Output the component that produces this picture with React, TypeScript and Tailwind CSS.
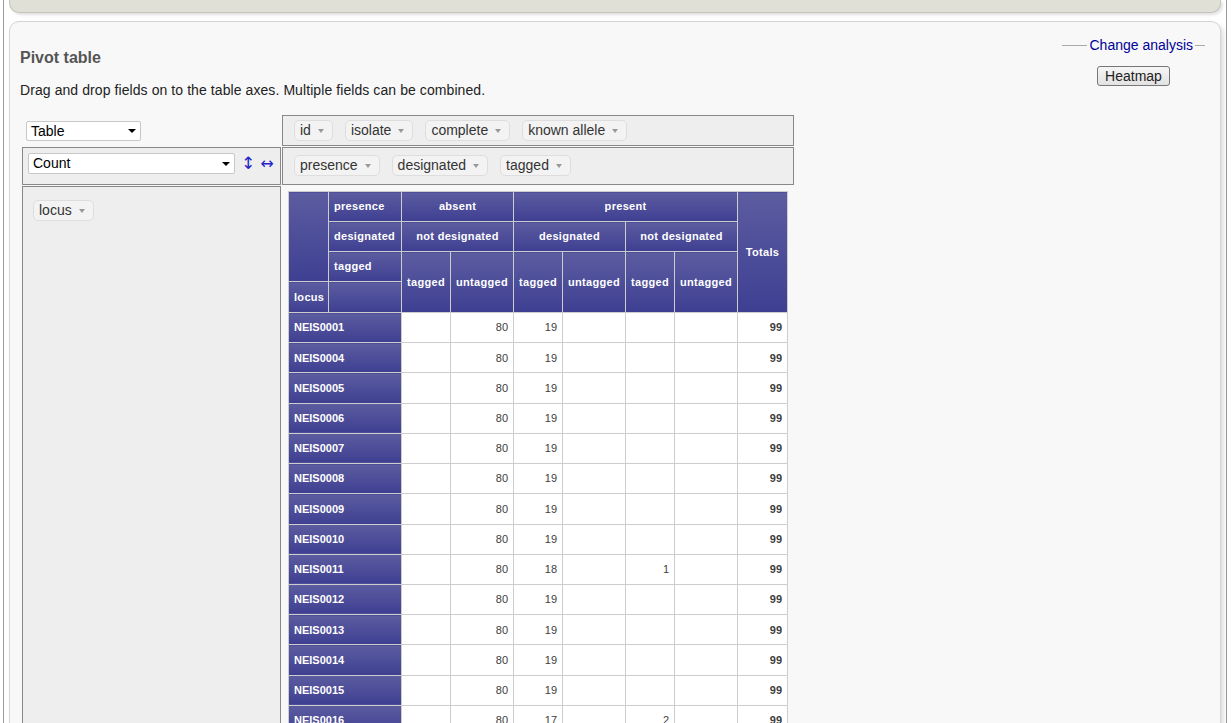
import React from 'react';

// header / row label cell look of the pivot table
const hd =
	"border border-[#cdcdcd] bg-linear-to-b from-[#5c5ca0] to-[#3f3f92] px-[5px] text-[11px] font-bold tracking-[0.3px] text-white";
const td = "border border-[#cdcdcd] bg-white px-[5px] text-right text-[11px] text-[#3d3d3d]";

type Row = {
	locus: string;
	absentUntagged: number;
	desTagged: number;
	notDesTagged?: number;
	total: number;
};

const rows: Row[] = [
	{ locus: "NEIS0001", absentUntagged: 80, desTagged: 19, total: 99 },
	{ locus: "NEIS0004", absentUntagged: 80, desTagged: 19, total: 99 },
	{ locus: "NEIS0005", absentUntagged: 80, desTagged: 19, total: 99 },
	{ locus: "NEIS0006", absentUntagged: 80, desTagged: 19, total: 99 },
	{ locus: "NEIS0007", absentUntagged: 80, desTagged: 19, total: 99 },
	{ locus: "NEIS0008", absentUntagged: 80, desTagged: 19, total: 99 },
	{ locus: "NEIS0009", absentUntagged: 80, desTagged: 19, total: 99 },
	{ locus: "NEIS0010", absentUntagged: 80, desTagged: 19, total: 99 },
	{ locus: "NEIS0011", absentUntagged: 80, desTagged: 18, notDesTagged: 1, total: 99 },
	{ locus: "NEIS0012", absentUntagged: 80, desTagged: 19, total: 99 },
	{ locus: "NEIS0013", absentUntagged: 80, desTagged: 19, total: 99 },
	{ locus: "NEIS0014", absentUntagged: 80, desTagged: 19, total: 99 },
	{ locus: "NEIS0015", absentUntagged: 80, desTagged: 19, total: 99 },
	{ locus: "NEIS0016", absentUntagged: 80, desTagged: 17, notDesTagged: 2, total: 99 },
	{ locus: "NEIS0017", absentUntagged: 80, desTagged: 19, total: 99 },
	{ locus: "NEIS0018", absentUntagged: 80, desTagged: 19, total: 99 },
];

function Chip({ label }: { label: string }) {
	return (
		<span className="inline-flex h-[21px] items-center whitespace-nowrap rounded-[5px] border border-[#dedede] bg-[#f3f3f3] pl-[5px] pr-[8px] text-[14px] text-[#333]">
			{label}
			<svg className="ml-[7px]" width="6" height="4" viewBox="0 0 6 4">
				<path d="M0 0h6L3 4z" fill="#999" />
			</svg>
		</span>
	);
}

function FakeSelect({ label, className }: { label: string; className: string }) {
	return (
		<div className={"flex items-center justify-between rounded-[2px] border border-[#c8c8c8] bg-white pl-[4px] pr-[4px] text-[14px] text-black " + className}>
			<span>{label}</span>
			<svg width="8" height="4" viewBox="0 0 8 4">
				<path d="M0 0h8L4 4z" fill="#000" />
			</svg>
		</div>
	);
}

function PivotTable() {
	return (
		<table className="w-[499px] table-fixed border-collapse">
			<colgroup>
				<col className="w-[40px]" />
				<col className="w-[73px]" />
				<col className="w-[49px]" />
				<col className="w-[63px]" />
				<col className="w-[49px]" />
				<col className="w-[63px]" />
				<col className="w-[49px]" />
				<col className="w-[63px]" />
				<col className="w-[50px]" />
			</colgroup>
			<thead>
				<tr className="h-[30px]">
					<th rowSpan={3} className={hd} />
					<th className={hd + " text-left"}>presence</th>
					<th colSpan={2} className={hd}>absent</th>
					<th colSpan={4} className={hd}>present</th>
					<th rowSpan={4} className={hd}>Totals</th>
				</tr>
				<tr className="h-[30px]">
					<th className={hd + " text-left"}>designated</th>
					<th colSpan={2} className={hd}>not designated</th>
					<th colSpan={2} className={hd}>designated</th>
					<th colSpan={2} className={hd}>not designated</th>
				</tr>
				<tr className="h-[30px]">
					<th className={hd + " text-left"}>tagged</th>
					<th rowSpan={2} className={hd}>tagged</th>
					<th rowSpan={2} className={hd}>untagged</th>
					<th rowSpan={2} className={hd}>tagged</th>
					<th rowSpan={2} className={hd}>untagged</th>
					<th rowSpan={2} className={hd}>tagged</th>
					<th rowSpan={2} className={hd}>untagged</th>
				</tr>
				<tr className="h-[31px]">
					<th className={hd + " text-left"}>locus</th>
					<th className={hd} />
				</tr>
			</thead>
			<tbody>
				{rows.map((r) => (
					<tr key={r.locus} className="h-[30.23px]">
						<th colSpan={2} className={hd + " text-left tracking-normal"}>{r.locus}</th>
						<td className={td} />
						<td className={td}>{r.absentUntagged}</td>
						<td className={td}>{r.desTagged}</td>
						<td className={td} />
						<td className={td}>{r.notDesTagged ?? ""}</td>
						<td className={td} />
						<td className={td + " font-bold"}>{r.total}</td>
					</tr>
				))}
			</tbody>
		</table>
	);
}

export default function App() {
	return (
		<div className="h-[723px] overflow-hidden bg-white font-['Liberation_Sans',Arial,sans-serif]">
			<div className="ml-[3px] h-full w-[1224px] border-x border-[#999] px-[5px]">
				<div className="h-[13px] rounded-b-[10px] border-x border-b border-[#c4c4bc] bg-[#e0e0d6] shadow-[2px_2px_3px_rgba(0,0,0,0.12)]" />

				<div className="mt-[8px] h-[800px] rounded-[10px] border border-[#d4d4d4] bg-[#f8f8f8] shadow-[3px_3px_4px_rgba(0,0,0,0.12)]">
					<div className="px-[10px] pt-[15px]">
						<div className="flex justify-between">
							<div className="pt-[12px]">
								<h2 className="text-[16px] font-bold leading-[18px] text-[#555]">Pivot table</h2>
								<p className="mt-[15px] text-[14px] leading-[16px] tracking-[0.08px] text-[#222]">
									Drag and drop fields on to the table axes. Multiple fields can be combined.
								</p>
							</div>
							<div className="mr-[5px] flex w-[143px] flex-col items-center">
								<div className="flex h-[16px] w-full items-center">
									<span className="h-px flex-1 bg-[#aaa]" />
									<a href="#" className="px-[2px] text-[14px] leading-[16px] text-[#000099]">
										Change analysis
									</a>
									<span className="h-px w-[10px] bg-[#aaa]" />
								</div>
								<button
									type="button"
									className="mt-[13px] h-[20px] rounded-[3px] border border-[#777] bg-linear-to-b from-[#f6f6f6] to-[#e2e2e2] px-[7px] text-[14px] leading-[16px] text-[#222]"
								>
									Heatmap
								</button>
							</div>
						</div>

						<div className="ml-[2px] mt-[17px] grid grid-cols-[259px_512px] grid-rows-[31px_38px_auto] gap-[1px]">
							<div className="pl-[4px] pt-[6px]">
								<FakeSelect label="Table" className="h-[20px] w-[115px]" />
							</div>
							<div className="flex items-center gap-[12px] border border-[#888] bg-[#eee] pl-[11px]">
								<Chip label="id" />
								<Chip label="isolate" />
								<Chip label="complete" />
								<Chip label="known allele" />
							</div>

							<div className="flex items-start border border-[#888] bg-[#eee] pl-[5px] pt-[5px]">
								<FakeSelect label="Count" className="h-[21px] w-[207px]" />
								<a href="#" className="ml-[6px] font-['DejaVu_Sans',sans-serif] text-[17px] leading-[21px] text-[#2323c8]">↕</a>
								<a href="#" className="ml-[5px] font-['DejaVu_Sans',sans-serif] text-[16px] leading-[21px] text-[#2323c8]">↔</a>
							</div>
							<div className="flex items-center gap-[12px] border border-[#888] bg-[#eee] pb-[1px] pl-[11px]">
								<Chip label="presence" />
								<Chip label="designated" />
								<Chip label="tagged" />
							</div>

							<div className="border border-[#888] bg-[#eee] pl-[10px] pt-[11px]">
								<Chip label="locus" />
							</div>
							<div className="pl-[6px] pt-[5px]">
								<PivotTable />
							</div>
						</div>
					</div>
				</div>
			</div>
		</div>
	);
}
